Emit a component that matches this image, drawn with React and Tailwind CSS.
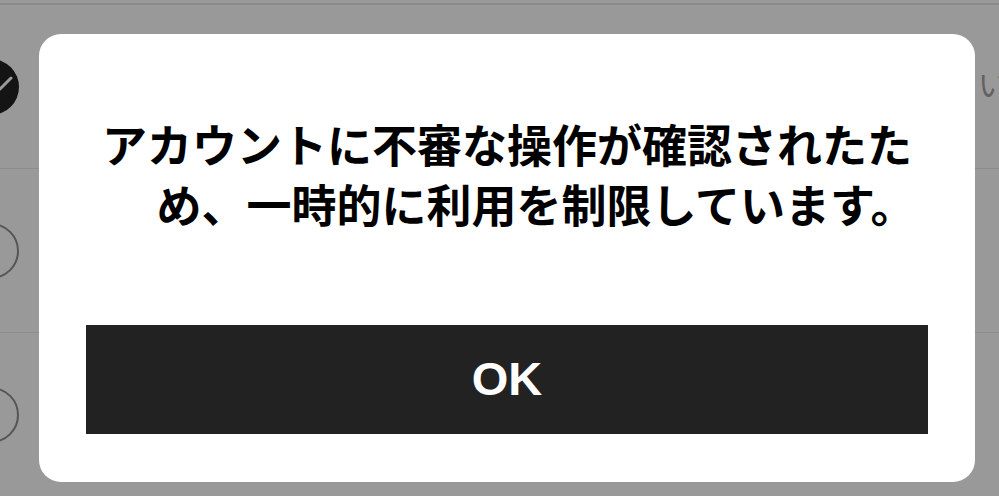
import React from 'react';

const rows = [
  { checked: true, text: 'いいえ' },
  { checked: false, text: '' },
  { checked: false, text: '' },
];

function Row({ checked, text }) {
  return (
    <div className="relative flex h-[164px] items-center border-b border-[#8c8c8c]">
      <div className="-ml-[37px] flex h-[56px] w-[56px] shrink-0 items-center justify-center">
        {checked ? (
          <div className="flex h-[56px] w-[56px] items-center justify-center rounded-full bg-[#141414]">
            <svg width="24" height="24" viewBox="0 0 24 24" className="ml-[26px] -mt-[6px]">
              <path d="M3 12l5 5 11-11" fill="none" stroke="#9a9a9a" strokeWidth="3" strokeLinecap="round" strokeLinejoin="round" />
            </svg>
          </div>
        ) : (
          <div className="h-[56px] w-[56px] rounded-full border-[2.5px] border-[#555]" />
        )}
      </div>
      <div className="flex-1" />
      {text && (
        <span className="-mt-[8px] w-[21px] overflow-hidden whitespace-nowrap text-[30px] leading-none text-[#616161]">
          {text}
        </span>
      )}
    </div>
  );
}

export default function App() {
  return (
    <div className="relative h-[496px] w-full overflow-hidden bg-[#999999]" style={{ fontFamily: '"Noto Sans CJK JP", "Liberation Sans", sans-serif' }}>
      <div className="h-[5px] border-b-2 border-[#8a8a8a]" />
      {rows.map((r, i) => (
        <Row key={i} {...r} />
      ))}

      {/* dialog */}
      <div className="absolute left-[39px] top-[34px] flex h-[448px] w-[936px] flex-col items-center rounded-[22px] bg-white px-[47px]">
        <p className="mt-[80px] flex w-full flex-col items-center text-[45px] font-bold leading-[60px] text-black">
          <span className="whitespace-nowrap">アカウントに不審な操作が確認されたた</span>
          <span className="ml-[58px] whitespace-nowrap">め、一時的に利用を制限しています。</span>
        </p>
        <button className="mt-auto mb-[48px] flex h-[109px] w-full items-center justify-center bg-[#222222] text-[47px] font-bold text-white" style={{ fontFamily: '"Liberation Sans", Arial, sans-serif' }}>
          OK
        </button>
      </div>
    </div>
  );
}
